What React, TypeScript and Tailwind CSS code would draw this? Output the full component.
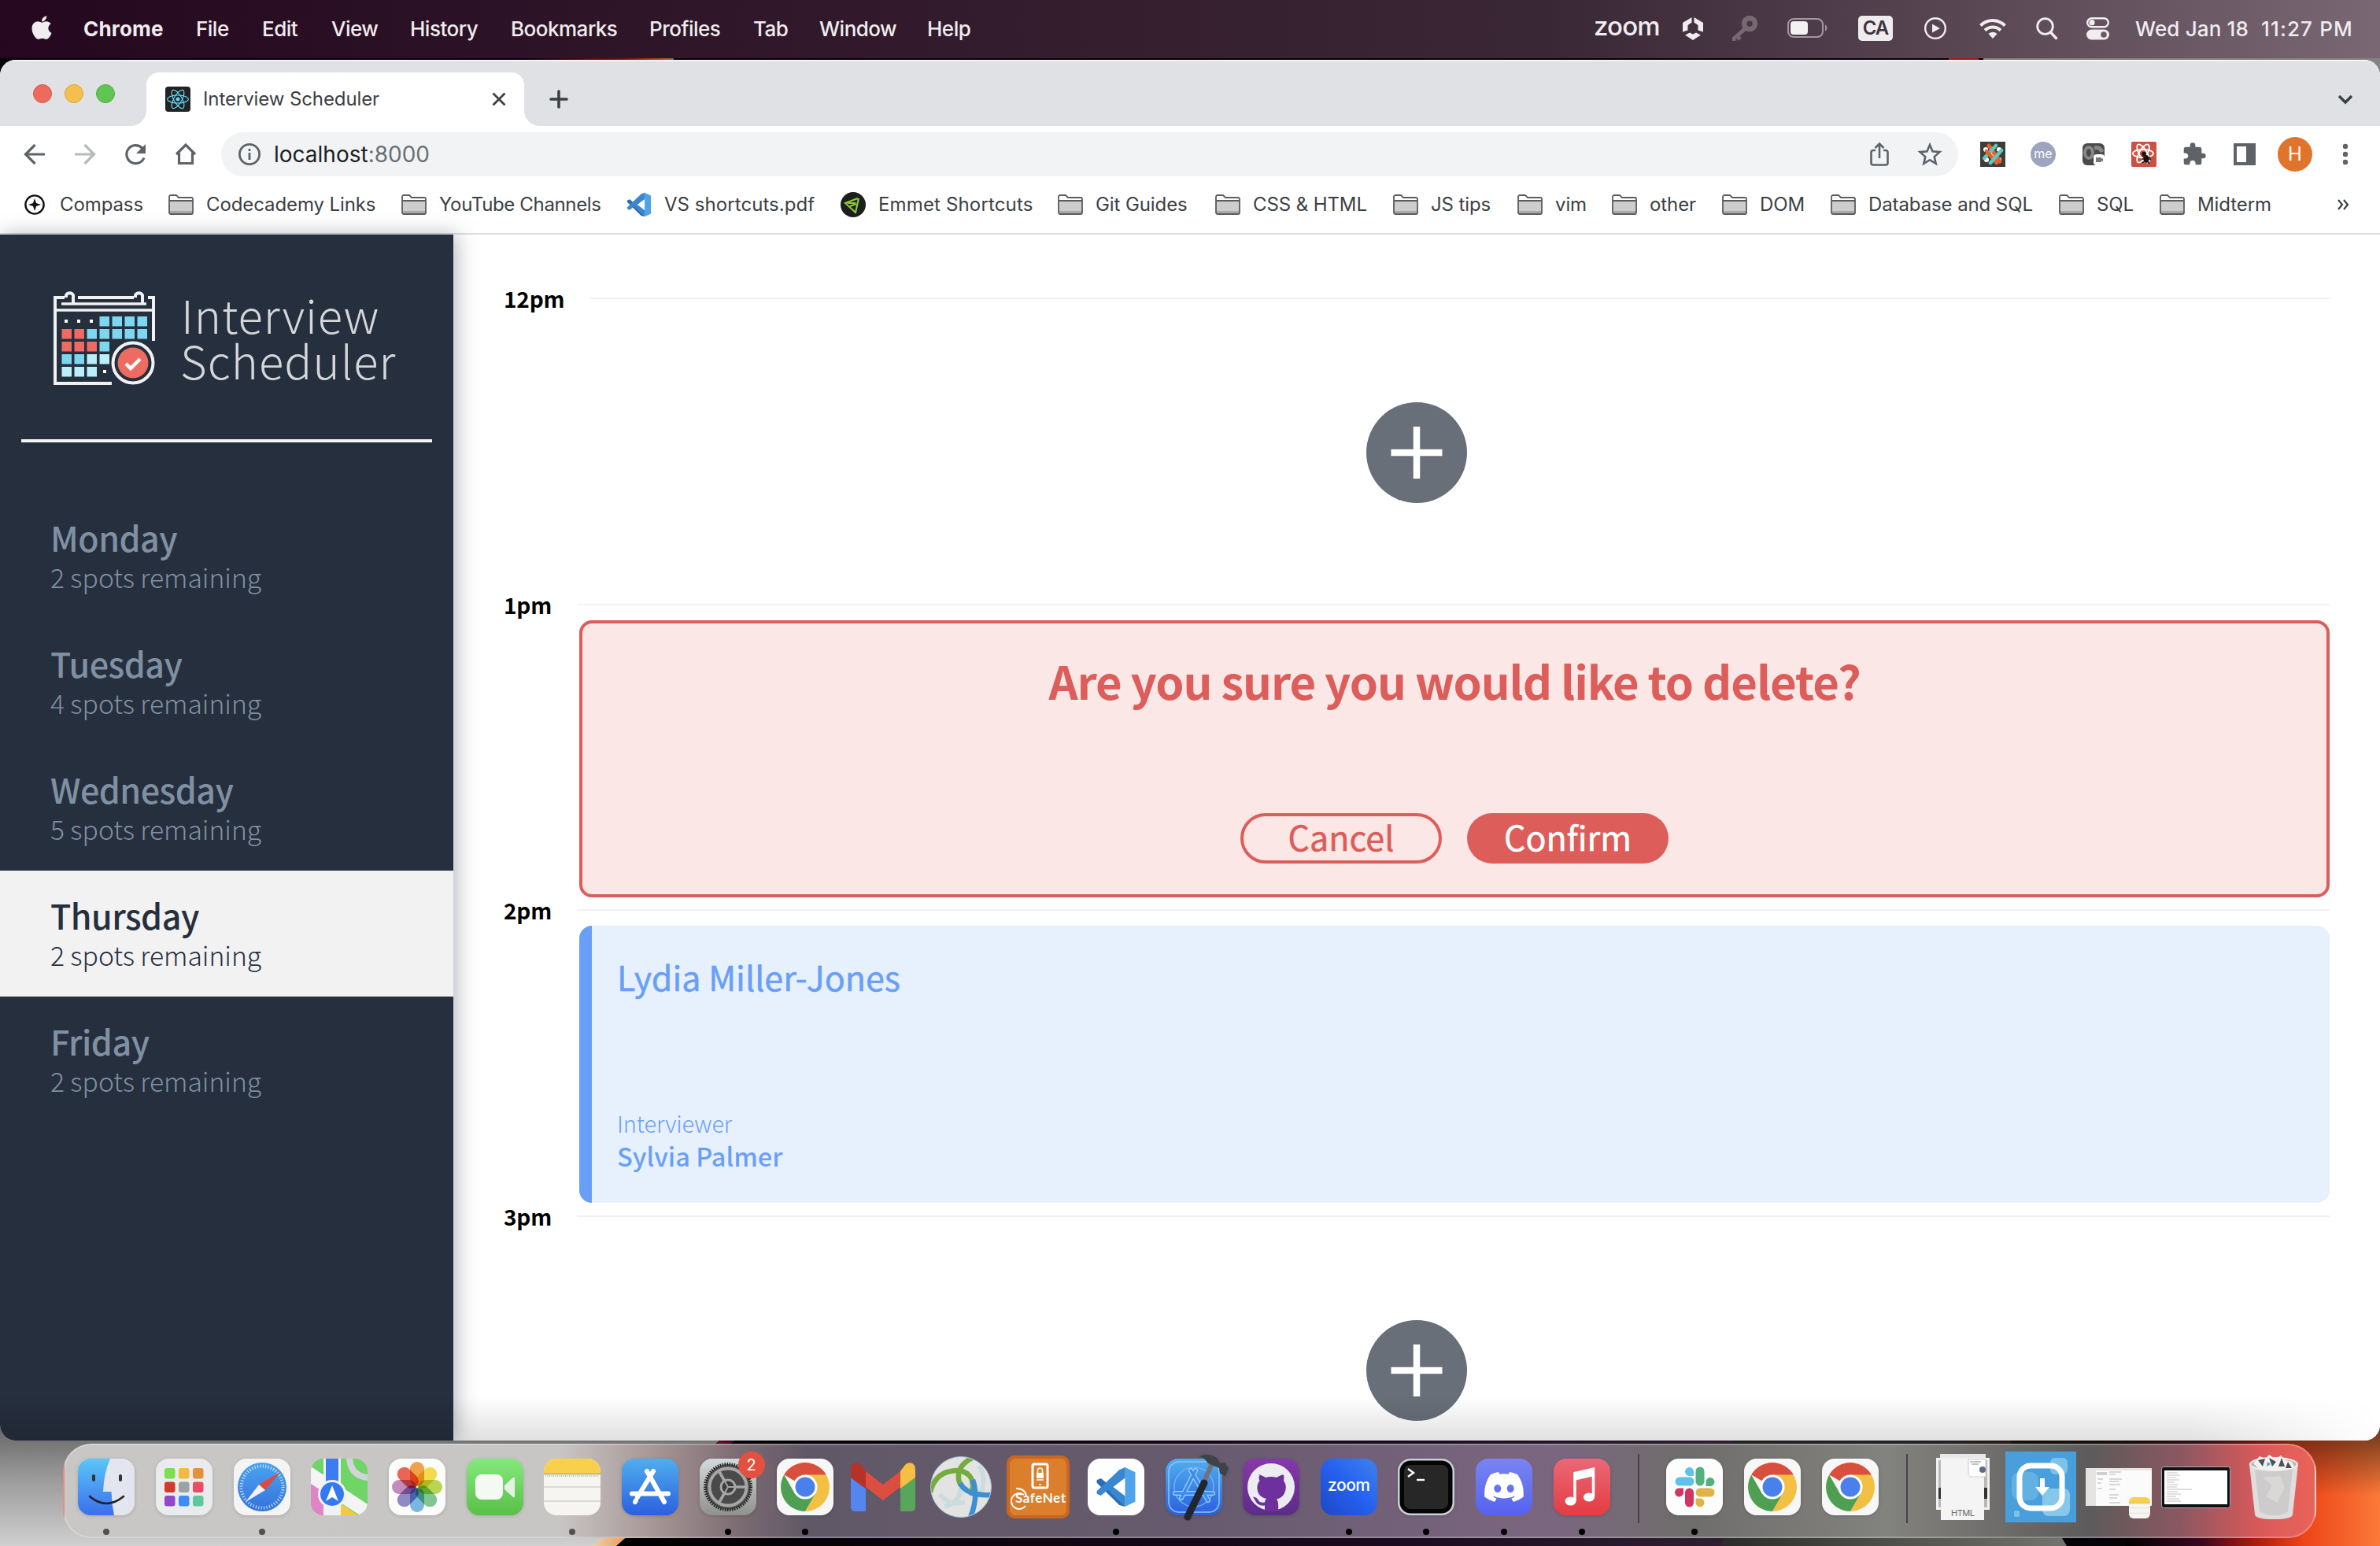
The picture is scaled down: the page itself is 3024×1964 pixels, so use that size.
import type { ReactNode } from 'react';
import { FaApple, FaDiscord, FaReact } from 'react-icons/fa';
import { MdExtension } from 'react-icons/md';

const source = "font-['Noto_Sans_CJK_SC','Source_Sans_Pro',sans-serif]";

/* ---------- menu bar ---------- */

const menus = [
  { label: 'Chrome', cls: 'w-[143px] font-bold tracking-[0.2px]' },
  { label: 'File', cls: 'w-[84px]' },
  { label: 'Edit', cls: 'w-[88px]' },
  { label: 'View', cls: 'w-[100px]' },
  { label: 'History', cls: 'w-[128px]' },
  { label: 'Bookmarks', cls: 'w-[176px]' },
  { label: 'Profiles', cls: 'w-[132px]' },
  { label: 'Tab', cls: 'w-[84px]' },
  { label: 'Window', cls: 'w-[137px]' },
  { label: 'Help', cls: 'w-[80px]' },
];

function MenuBar() {
  return (
    <header className="relative flex h-[74px] shrink-0 items-center bg-linear-to-r from-[#25081f] via-[#3a2735] via-65% to-[#796873] pb-[2px] font-[Inter] text-[26px] font-medium tracking-[-0.5px] text-[#f0ecef]">
      <FaApple className="mb-[2px] ml-[36px] h-[34px] w-[34px]" />
      <nav className="ml-[36px] flex">
        {menus.map((m) => (
          <span key={m.label} className={m.cls}>
            {m.label}
          </span>
        ))}
      </nav>
      <div className="ml-auto flex items-center">
        <span className="mb-[5px] w-[113px] text-[33px] leading-none tracking-[-0.8px]">zoom</span>
        <svg className="w-[63px]" width="63" height="32" viewBox="0 0 63 32" fill="currentColor">
          <path d="M11.500 2v6.500L6.500 12v6.500L0 20.500V9zM14.500 2v6.500l5 3.500v6.500l6.500 2V9zM3 24.500l6-3 4 2 4-2 6 3L13 31z" />
        </svg>
        <svg width="70" height="36" viewBox="0 0 70 36" fill="none" opacity=".25">
          <circle cx="22" cy="12" r="7" stroke="#fff" strokeWidth="6.500" />
          <path d="M17 18L2 31v3M6 28l4 4" stroke="#fff" strokeWidth="5" />
        </svg>
        <svg width="90" height="28" viewBox="0 0 90 28" fill="none">
          <rect x="1" y="2" width="44" height="23" rx="7" stroke="#a397a1" strokeWidth="2" />
          <rect x="4" y="5" width="22" height="17" rx="4" fill="#f4f1f3" />
          <path d="M48 9.500c3 1 3 7 0 8z" fill="#a397a1" />
        </svg>
        <span className="mr-[40px] flex h-8 w-[44px] items-center justify-center rounded-[5px] bg-[#efecee] text-[24px] font-semibold tracking-[-1px] text-[#3f333d]">
          CA
        </span>
        <svg width="70" height="30" viewBox="0 0 70 30">
          <circle cx="14" cy="15" r="12.800" fill="none" stroke="currentColor" strokeWidth="2.400" />
          <path d="M10 9.500l10 5.500-10 5.500z" fill="currentColor" />
        </svg>
        <svg width="72" height="28" viewBox="0 0 72 28" fill="none" stroke="currentColor" strokeWidth="4">
          <path d="M1.500 10.500a22 22 0 0 1 31 0" />
          <path d="M7 16.500a14.500 14.500 0 0 1 20 0" />
          <path d="M17 27l-5.500-6a8 8 0 0 1 11 0z" fill="currentColor" stroke="none" />
        </svg>
        <svg width="64" height="30" viewBox="0 0 64 30" fill="none" stroke="currentColor" strokeWidth="2.800">
          <circle cx="11.500" cy="12.500" r="9.800" />
          <path d="M18.500 20l7 7.500" strokeWidth="3.400" strokeLinecap="round" />
        </svg>
        <svg width="62" height="30" viewBox="0 0 62 30">
          <rect x="1.200" y="2.200" width="26.600" height="11" rx="5.500" fill="none" stroke="currentColor" strokeWidth="2.400" />
          <circle cx="7" cy="7.700" r="3.600" fill="currentColor" />
          <rect x="0" y="16.500" width="29" height="13" rx="6.500" fill="currentColor" />
          <circle cx="22" cy="23" r="3.800" fill="#6a5865" />
        </svg>
        <span className="w-[160px] tracking-[0.15px]">Wed Jan 18</span>
        <span className="w-[151px] tracking-[1.150px]">11:27 PM</span>
      </div>
    </header>
  );
}

/* ---------- browser chrome ---------- */

function TabStrip() {
  return (
    <div className="flex h-[84px] shrink-0 border-t-2 border-[#f4f2f6] bg-[#dfe1e5] pt-[14px]">
      <div className="flex w-[166px] gap-4 pt-[15px] pl-[42px]">
        <i className="size-6 rounded-full border border-[#d8574b] bg-[#ed6a5e]" />
        <i className="size-6 rounded-full border border-[#dfa53c] bg-[#f5bf4f]" />
        <i className="size-6 rounded-full border border-[#50ac41] bg-[#61c554]" />
      </div>
      <svg width="20" height="68" className="self-end" viewBox="0 0 20 68">
        <path d="M20 48v20H0a20 20 0 0 0 20-20z" fill="#fff" />
      </svg>
      <div className="flex h-[68px] w-[480px] items-center rounded-t-[16px] bg-white pl-[24px] font-[Inter]">
        <span className="flex size-8 items-center justify-center rounded-[4px] bg-[#222]">
          <FaReact className="size-[28px] text-[#61dafb]" />
        </span>
        <span className="ml-[16px] w-[367px] text-[24px] tracking-[-0.1px] text-[#3c4043]">Interview Scheduler</span>
        <svg width="18" height="18" viewBox="0 0 18 18" stroke="#3c4043" strokeWidth="2.800">
          <path d="M1.500 1.500l15 15M16.500 1.500l-15 15" />
        </svg>
      </div>
      <svg width="20" height="68" className="self-end" viewBox="0 0 20 68">
        <path d="M0 48v20h20A20 20 0 0 1 0 48z" fill="#fff" />
      </svg>
      <svg width="24" height="24" viewBox="0 0 24 24" stroke="#3c4043" strokeWidth="3.600" strokeLinecap="round" className="mt-[22px] ml-[12px]">
        <path d="M12 2v20M2 12h20" />
      </svg>
      <svg width="20" height="14" viewBox="0 0 20 14" fill="none" stroke="#3c4043" strokeWidth="3.400" className="mt-[28px] mr-[34px] ml-auto">
        <path d="M2 2l8 8 8-8" />
      </svg>
    </div>
  );
}

function ToolIcon({ children, cls = '' }: { children: ReactNode; cls?: string }) {
  return (
    <svg width="32" height="32" viewBox="0 0 32 32" fill="none" stroke="#5f6368" strokeWidth="3.200" className={cls}>
      {children}
    </svg>
  );
}

function Toolbar() {
  return (
    <div className="flex h-[72px] shrink-0 items-center bg-white pl-[28px] font-[Inter]">
      <ToolIcon cls="mr-8">
        <path d="M29 16H5M16.500 4L4.500 16l12 12" />
      </ToolIcon>
      <ToolIcon cls="mr-8 opacity-45">
        <path d="M3 16h24M15.500 4l12 12-12 12" />
      </ToolIcon>
      <ToolIcon cls="mr-8">
        <path d="M27 20.500A11.500 11.500 0 1 1 24.500 8l2 2" />
        <path d="M29 3v12H17z" fill="#5f6368" stroke="none" />
      </ToolIcon>
      <ToolIcon cls="mr-[29px]">
        <path d="M4 16L16 4l12 12M7.500 14v13.500h17V14" />
      </ToolIcon>
      <div className="flex h-[56px] w-[2207px] items-center rounded-full bg-[#f1f3f4] pl-[21px]">
        <svg width="30" height="30" viewBox="0 0 30 30" fill="none" stroke="#5f6368" strokeWidth="2.800">
          <circle cx="15" cy="15" r="12.600" />
          <path d="M15 13v9M15 8v3" />
        </svg>
        <span className="ml-[16px] text-[28px] text-[#202124]">
          localhost<span className="text-[#6b6f73]">:8000</span>
        </span>
        <svg width="28" height="32" viewBox="0 0 28 32" fill="none" stroke="#5f6368" strokeWidth="2.600" className="mr-[34px] ml-auto">
          <path d="M9 11H6a2.500 2.500 0 0 0-2.500 2.500V27A2.500 2.500 0 0 0 6 29.500h16a2.500 2.500 0 0 0 2.500-2.500V13.500A2.500 2.500 0 0 0 22 11h-3M14 21V2.500M8.500 8L14 2.500 19.500 8" />
        </svg>
        <svg width="32" height="32" viewBox="0 0 32 32" fill="none" stroke="#5f6368" strokeWidth="2.600" className="mr-[20px]">
          <path d="M16 4l3.500 8.300 9 .8-6.800 6 2 8.800L16 23.200l-7.700 4.700 2-8.800-6.800-6 9-.8z" />
        </svg>
      </div>
      <div className="flex items-center gap-8 pl-[28px]">
        <svg width="32" height="32" viewBox="0 0 32 32" fill="none" strokeWidth="4.600">
          <rect width="32" height="32" fill="#3d3d3d" />
          <path d="M7 10h.1M24 10h.1M8 23h.1M24 23h.1M16 16h.1" stroke="#fff" strokeWidth="6" strokeLinecap="round" />
          <path d="M11 5L25 25" stroke="#e8602c" strokeWidth="5" strokeLinecap="round" />
          <path d="M20 5L5 21" stroke="#5ec8ba" strokeLinecap="round" />
          <path d="M8 12l13 15" stroke="#e8602c" strokeLinecap="round" />
          <path d="M27 11L13 27" stroke="#5ec8ba" strokeLinecap="round" />
        </svg>
        <span className="flex size-8 items-center justify-center rounded-full bg-[#9ea3c0] pb-[2px] text-[16px] text-white">me</span>
        <svg width="32" height="32" viewBox="0 0 32 32">
          <rect x="2" y="2" width="28" height="28" rx="6" fill="#4a4a4a" />
          <ellipse cx="10" cy="14" rx="5" ry="7" fill="none" stroke="#888" strokeWidth="4" />
          <path d="M17 8q7-2 10 5" fill="none" stroke="#888" strokeWidth="5" />
          <rect x="16" y="16" width="14" height="14" rx="4" fill="#fff" />
          <path d="M19 20h7v6h-7zM26 22l2-1v4l-2-1z" fill="#777" />
        </svg>
        <svg width="32" height="32" viewBox="0 0 32 32" fill="none" stroke="#fff" strokeWidth="1.800">
          <rect width="32" height="32" rx="2" fill="#cb5140" stroke="none" />
          <ellipse cx="15" cy="15" rx="13" ry="5" />
          <ellipse cx="15" cy="15" rx="13" ry="5" transform="rotate(60 15 15)" />
          <ellipse cx="15" cy="15" rx="13" ry="5" transform="rotate(120 15 15)" />
          <ellipse cx="19" cy="22" rx="3.500" ry="5" fill="#1d1210" stroke="none" />
          <circle cx="16" cy="15.500" r="2.800" fill="#1d1210" stroke="none" />
          <path d="M13 22h12M14 27l10-8M23 28l-3-4M14 18l4 4" stroke="#1d1210" strokeWidth="1.500" />
        </svg>
        <MdExtension className="size-8 text-[#5f6368]" />
        <svg width="32" height="32" viewBox="0 0 32 32">
          <path d="M2 2h28v28H2zM6 6v20h12V6z" fill="#5f6368" fillRule="evenodd" />
        </svg>
      </div>
      <span className="ml-[26px] flex size-11 items-center justify-center rounded-full bg-[#e0742c] text-[24px] text-white">H</span>
      <svg width="8" height="28" viewBox="0 0 8 28" fill="#5f6368" className="ml-[38px]">
        <circle cx="4" cy="4" r="3.200" />
        <circle cx="4" cy="14" r="3.200" />
        <circle cx="4" cy="24" r="3.200" />
      </svg>
    </div>
  );
}

function Folder() {
  return (
    <svg width="32" height="26" viewBox="0 0 32 26">
      <path d="M1 3a2 2 0 0 1 2-2h7l3 3h16a2 2 0 0 1 2 2v17a2 2 0 0 1-2 2H3a2 2 0 0 1-2-2z" fill="#fff" />
      <path d="M1 8h30v14H1z" fill="#cdcdcd" />
      <path d="M1 21h30v3H1z" fill="#a9a9a9" />
      <path d="M1 8h30M1 3a2 2 0 0 1 2-2h7l3 3h16a2 2 0 0 1 2 2v17a2 2 0 0 1-2 2H3a2 2 0 0 1-2-2z" fill="none" stroke="#5c5c5c" strokeWidth="1.800" />
    </svg>
  );
}

function VsCode({ size }: { size: number }) {
  return (
    <svg width={size} height={size} viewBox="0 0 100 100">
      <path d="M72 2L30 43 13 29 3 33v7l55 54 14 4z" fill="#2a6db5" />
      <path d="M72 98L30 57 13 71 3 67v-7L58 8l14-6z" fill="#3b86d0" />
      <path d="M72 2l25 12v72L72 98c2-1 1-4 0-5V7z" fill="#4fa3ea" />
      <path d="M72 28v44L43 50z" fill="#fff" />
    </svg>
  );
}

const bookmarks: { label: string; cls: string; icon?: 'compass' | 'vs' | 'emmet' }[] = [
  { label: 'Compass', cls: 'w-[186px]', icon: 'compass' },
  { label: 'Codecademy Links', cls: 'w-[296px]' },
  { label: 'YouTube Channels', cls: 'w-[286px] tracking-[-0.35px]' },
  { label: 'VS shortcuts.pdf', cls: 'w-[272px] tracking-[0.05px]', icon: 'vs' },
  { label: 'Emmet Shortcuts', cls: 'w-[276px] tracking-[0.15px]', icon: 'emmet' },
  { label: 'Git Guides', cls: 'w-[200px]' },
  { label: 'CSS & HTML', cls: 'w-[226px]' },
  { label: 'JS tips', cls: 'w-[158px]' },
  { label: 'vim', cls: 'w-[120px]' },
  { label: 'other', cls: 'w-[140px]' },
  { label: 'DOM', cls: 'w-[138px]' },
  { label: 'Database and SQL', cls: 'w-[290px]' },
  { label: 'SQL', cls: 'w-[128px]' },
  { label: 'Midterm', cls: 'w-[225px]' },
];

function BookmarkBar() {
  return (
    <div className="flex h-[66px] shrink-0 items-center border-b-2 border-[#dadce0] bg-white pb-[9px] pl-[28px] font-[Inter] text-[24px] tracking-[-0.1px] text-[#3c4043]">
      {bookmarks.map((b) => (
        <div key={b.label} className={`flex shrink-0 items-center gap-4 whitespace-nowrap ${b.cls}`}>
          {!b.icon && <Folder />}
          {b.icon === 'compass' && (
            <svg width="32" height="32" viewBox="0 0 32 32">
              <circle cx="16" cy="16" r="11.600" fill="none" stroke="#111" strokeWidth="2.400" />
              <path d="M16 8l2 6 6 2-6 2-2 6-2-6-6-2 6-2z" fill="#111" />
            </svg>
          )}
          {b.icon === 'vs' && <VsCode size={32} />}
          {b.icon === 'emmet' && (
            <svg width="32" height="32" viewBox="0 0 32 32" fill="none" stroke="#8fc83c" strokeWidth="2.200">
              <circle cx="16" cy="16" r="16" fill="#1d1f1c" stroke="none" />
              <path d="M22 8L6 14l13 12 4-18M9 14h10M12 18l8-3" />
            </svg>
          )}
          <span>{b.label}</span>
        </div>
      ))}
      <svg width="16" height="14" viewBox="0 0 16 14" fill="none" stroke="#3c4043" strokeWidth="2.200">
        <path d="M2 1l5 6-5 6M9 1l5 6-5 6" />
      </svg>
    </div>
  );
}

/* ---------- scheduler app ---------- */

const R = '#ee6b62';
const B = '#7dd8ef';
const L = '#baeffa';
const cells: (string | null)[][] = [
  [null, null, null, B, B, B, B],
  [R, R, B, B, B, B, B],
  [R, R, R, B],
  [B, B, L, L],
  [L, L, L],
];

function Logo() {
  return (
    <svg width="130" height="122" viewBox="0 0 130 122" fill="none">
      <path d="M12 10H2v109h72M120 10h7v55M31 10h71" stroke="#f1f1f1" strokeWidth="4" />
      <path d="M10 18h108M2 26h125" stroke="#f1f1f1" strokeWidth="3.600" />
      <path d="M2 10h12M16 10V7a5 5 0 0 1 9 0v11M104 10V7a5 5 0 0 1 9 0v11" stroke="#f1f1f1" strokeWidth="4" />
      {cells.map((row, y) =>
        row.map((c, x) => c && <rect key={`${x}-${y}`} x={10.5 + x * 16} y={34 + y * 16} width="12.500" height="12.500" fill={c} />),
      )}
      <path d="M14 38h4v4h-4zM30 38h4v4h-4zM46 38h4v4h-4zM63 102h4v4h-4z" fill="#fff" />
      <circle cx="101" cy="93" r="29" fill="#262f3e" />
      <circle cx="101" cy="93" r="25.500" stroke="#f1f1f1" strokeWidth="4" />
      <circle cx="101" cy="93" r="19.500" fill={R} />
      <path d="M92 94l6 6 12-12" stroke="#fff" strokeWidth="4.500" />
    </svg>
  );
}

const days = [
  ['Monday', '2 spots remaining'],
  ['Tuesday', '4 spots remaining'],
  ['Wednesday', '5 spots remaining'],
  ['Thursday', '2 spots remaining'],
  ['Friday', '2 spots remaining'],
];

function Sidebar() {
  return (
    <aside className={`relative z-10 flex w-[576px] shrink-0 flex-col bg-[#262f3e] pt-[70px] shadow-[4px_0_24px_rgba(38,47,62,0.35)] ${source}`}>
      <div className="flex h-[122px] pl-[68px]">
        <Logo />
        <div className="ml-[31px] pt-[2px] text-[58px] leading-[58px] font-light text-[#d5d6d8]">
          <div className="ml-[1px] tracking-[0.950px]">Interview</div>
          <div className="tracking-[1.100px]">Scheduler</div>
        </div>
      </div>
      <hr className="mx-[27px] mt-[68px] h-1 border-0 bg-[#f4f6f2]" />
      <ul className="mt-[64px]">
        {days.map(([day, spots]) => (
          <li key={day} className={`h-[160px] pt-[30px] pl-[64px] ${day === 'Thursday' ? 'bg-[#f2f2f2] text-[#262f3e]' : 'text-[#8090a3]'}`}>
            <h2 className="text-[43px] leading-[52px] font-medium tracking-[-0.5px]">{day}</h2>
            <h3 className="text-[33.700px] leading-[50px] font-light tracking-[-0.05px]">{spots}</h3>
          </li>
        ))}
      </ul>
    </aside>
  );
}

function Slot({ time, children }: { time: string; children: ReactNode }) {
  return (
    <article className="h-[388.670px] pr-[64px] pl-[64px]">
      <header className="flex h-5 items-center">
        <h4 className="mr-[32px] text-[28px] leading-5 font-bold tracking-[-0.2px] text-black">{time}</h4>
        <div className="h-[2px] flex-1 bg-[#f1f1f1]" />
      </header>
      <div className="mt-[10px] ml-[96px] h-[352px]">{children}</div>
    </article>
  );
}

function AddButton() {
  return (
    <div className="flex h-full items-center justify-center pr-[96px]">
      <svg width="128" height="128" viewBox="0 0 128 128">
        <circle cx="64" cy="64" r="64" fill="#686f79" />
        <path d="M64 31v66M31.500 64h65" stroke="#fff" strokeWidth="8.500" />
      </svg>
    </div>
  );
}

function Schedule() {
  return (
    <main className={`flex-1 bg-white pt-[71px] ${source}`}>
      <Slot time="12pm">
        <AddButton />
      </Slot>
      <Slot time="1pm">
        <div className="flex h-full flex-col items-center rounded-[16px] border-4 border-[#dc5d59] bg-[#fae7e6] pt-[43px] text-[#dc5d59]">
          <h1 className="text-[58px] leading-[58px] font-bold tracking-[-1.100px]">Are you sure you would like to delete?</h1>
          <div className="mt-[140px] flex gap-8 text-[43px] [-webkit-text-stroke:0.500px]">
            <button className="flex h-16 w-64 items-center justify-center rounded-full border-4 border-[#dc5d59] pb-[4px]">Cancel</button>
            <button className="flex h-16 w-64 items-center justify-center rounded-full bg-[#dc5d59] pb-[4px] text-white">Confirm</button>
          </div>
        </div>
      </Slot>
      <Slot time="2pm">
        <div className="h-full rounded-[16px] border-l-[16px] border-[#6a9ff8] bg-[#e7f1fe] pt-[38px] pl-[32px] text-[#6a9ff8]">
          <h2 className="text-[43px] leading-[52px] [-webkit-text-stroke:0.500px]">Lydia Miller-Jones</h2>
          <h4 className="mt-[142px] text-[29px] leading-[36px] font-light tracking-[-0.15px]">Interviewer</h4>
          <h3 className="text-[32.500px] leading-[47px] font-medium">Sylvia Palmer</h3>
        </div>
      </Slot>
      <Slot time="3pm">
        <AddButton />
      </Slot>
    </main>
  );
}

/* ---------- dock ---------- */

function Tile({ fill, children }: { fill: string; children?: ReactNode }) {
  return (
    <svg width="72" height="72" viewBox="0 0 72 72" className="overflow-visible drop-shadow-sm">
      <rect width="72" height="72" rx="16" fill={fill} />
      {children}
    </svg>
  );
}

function Finder() {
  return (
    <Tile fill="#e3e6ee">
      <path d="M41 0H16A16 16 0 0 0 0 16v40a16 16 0 0 0 16 16h30q-3-14-3.500-30H32Q33 18 41 0z" fill="url(#gFinder)" />
      <path d="M20 22v5M54 22v5" stroke="#333" strokeWidth="4" strokeLinecap="round" />
      <path d="M15 48q21 18 43 0" stroke="#222" strokeWidth="2.600" fill="none" strokeLinecap="round" />
    </Tile>
  );
}

function Launchpad() {
  const c = ['#7be04f', '#f5b840', '#e5903a', '#d23a2c', '#9aa2a5', '#e84d63', '#9147c9', '#3b8df5', '#5fc79b'];
  return (
    <Tile fill="#eaebed">
      {c.map((f, i) => (
        <rect key={f} x={11 + (i % 3) * 18} y={12 + Math.floor(i / 3) * 17.5} width="13.500" height="13.500" rx="3" fill={f} />
      ))}
    </Tile>
  );
}

function Safari() {
  return (
    <Tile fill="#f4f4f4">
      <circle cx="36" cy="36" r="31" fill="url(#gSafari)" />
      <circle cx="36" cy="36" r="26.500" fill="none" stroke="#d8ecff" strokeWidth="4" strokeDasharray="1 2.470" />
      <path d="M59 17L32 33l8 7z" fill="#e2483d" />
      <path d="M15 55l17-22 8 7z" fill="#f2f2f2" />
    </Tile>
  );
}

function Maps() {
  return (
    <svg width="72" height="72" viewBox="0 0 72 72">
      <clipPath id="maps">
        <rect width="72" height="72" rx="16" />
      </clipPath>
      <g clipPath="url(#maps)">
        <rect width="72" height="72" fill="#6fd566" />
        <path d="M0 28L18 40V72H0z" fill="#e084c8" />
        <path d="M0 10l72 48v20L0 32z" fill="#f4f4f6" />
        <path d="M38 57l22 15H38z" fill="#f5c93f" />
        <path d="M16 0h22v72H16z" fill="#f0f1f4" />
        <path d="M19 0h16v40H19z" fill="#3b7df0" />
        <path d="M49 0q2 22 23 24" fill="none" stroke="#d3d4db" strokeWidth="8" />
        <circle cx="27" cy="45" r="18" fill="#f1f2f5" />
        <circle cx="27" cy="45" r="15" fill="#3478f3" />
        <path d="M27 34l8 20-8-5-8 5z" fill="#fff" />
      </g>
    </svg>
  );
}

function Photos() {
  const c = ['#f09a37', '#f4dc3a', '#b5d342', '#74c385', '#6db0e0', '#8680c0', '#c07fb8', '#ea5545'];
  return (
    <Tile fill="#fcfcfc">
      {c.map((f, i) => (
        <rect key={f} x="27" y="4" width="18" height="31" rx="9" fill={f} className="mix-blend-multiply" opacity=".9" transform={`rotate(${i * 45} 36 36)`} />
      ))}
    </Tile>
  );
}

function FaceTime() {
  return (
    <Tile fill="url(#gGreen)">
      <rect x="11" y="20" width="35" height="32" rx="8" fill="#f4faf3" />
      <path d="M48 34l11-10q2-1 2 1v23q0 2-2 1L48 39z" fill="#e4f2e1" />
    </Tile>
  );
}

function Notes({ w = 72 }: { w?: number }) {
  return (
    <svg width={w} height={w} viewBox="0 0 72 72">
      <rect width="72" height="72" rx="16" fill="#f6f5f1" />
      <path d="M0 19v-3A16 16 0 0 1 16 0h40a16 16 0 0 1 16 16v3z" fill="#f9d04c" />
      <path d="M0 19.500h72" stroke="#b9a970" strokeWidth="1.500" />
      <path d="M2 22h68" stroke="#b5b5b5" strokeWidth="2" strokeDasharray="1 1.500" />
      <path d="M0 36h72M0 54h72" stroke="#d2d1ce" strokeWidth="1.400" />
    </svg>
  );
}

function AppStore() {
  return (
    <Tile fill="url(#gBlue)">
      <path d="M40 16L20 49M32 16l22 39M13 44.500h46M18 53l-1 2" stroke="#fff" strokeWidth="6" strokeLinecap="round" />
    </Tile>
  );
}

function Settings() {
  return (
    <div className="relative">
      <Tile fill="url(#gGrey)">
        <circle cx="36" cy="36" r="29" fill="#555" />
        <circle cx="36" cy="36" r="29" fill="none" stroke="#222" strokeWidth="4" strokeDasharray="1.500 1.500" />
        <circle cx="36" cy="36" r="23.500" fill="#4a4a4a" stroke="#a6a6a6" strokeWidth="4" />
        <path d="M36 36h22M36 36L24 15M36 36L24 57" stroke="#a6a6a6" strokeWidth="3.600" />
        <circle cx="36" cy="36" r="9" fill="#3c3c3c" stroke="#a6a6a6" strokeWidth="3" />
        <path d="M36 36h9M36 36l-4.500-8M36 36l-4.500 8" stroke="#a6a6a6" strokeWidth="2" />
      </Tile>
      <span className="absolute -top-[9px] -right-[11px] flex size-[34px] items-center justify-center rounded-full bg-[#e4503f] font-[Inter] text-[20px] text-white">
        2
      </span>
    </div>
  );
}

function Chrome() {
  return (
    <Tile fill="#f7f7f7">
      <path d="M9.200 20.500A31 31 0 0 1 62.800 20.500L36 36z" fill="#d94f3d" />
      <path d="M36 20.500h26.800A31 31 0 0 1 36 67l13.400-23.300z" fill="#f3c044" />
      <path d="M22.600 43.700L9.200 20.500A31 31 0 0 0 36 67l13.400-23.300z" fill="#4f9f52" />
      <circle cx="36" cy="36" r="15.500" fill="#fff" />
      <circle cx="36" cy="36" r="12.500" fill="#4a80ec" />
    </Tile>
  );
}

function Gmail() {
  return (
    <svg width="84" height="64" viewBox="0 0 84 64">
      <path d="M1 20l19 14v29H6a5 5 0 0 1-5-5z" fill="#5585ee" />
      <path d="M83 20L64 34v29h14a5 5 0 0 0 5-5z" fill="#58a65c" />
      <path d="M20 12l22 17 22-17v20L42 49 20 32z" fill="#dc4f40" />
      <path d="M1 10C1 1 9-1 14 4l6 8v22L1 20z" fill="#b63227" />
      <path d="M83 10c0-9-8-11-13-6l-6 8v22l19-14z" fill="#f3c044" />
    </svg>
  );
}

function Cisco() {
  return (
    <svg width="78" height="78" viewBox="0 0 78 78" fill="none">
      <clipPath id="cisco">
        <circle cx="39" cy="39" r="38" />
      </clipPath>
      <circle cx="39" cy="39" r="38.500" fill="#e3e3e1" stroke="#9cc4da" />
      <g clipPath="url(#cisco)">
        <path d="M12 48q12 16 32 10M62 12q10 16 2 34M18 64q22-6 20-24" stroke="#cbdcde" strokeWidth="6" />
        <path d="M0 46Q6 18 36 18q24 4 16 32" stroke="#74ac40" strokeWidth="6.500" />
        <path d="M58 0Q34 10 36 28q0 4 3 9" stroke="#74ac40" strokeWidth="6.500" />
        <path d="M38 34q8 17 42 15M54 30q8 22-4 50" stroke="#3d8ed3" strokeWidth="6.500" />
      </g>
    </svg>
  );
}

function SafeNet() {
  return (
    <svg width="80" height="80" viewBox="0 0 80 80" fill="none">
      <rect width="80" height="80" rx="10" fill="#c9661f" />
      <rect x="4" y="4" width="72" height="72" rx="7" fill="#dc7f2c" />
      <rect x="33" y="11" width="19" height="30" rx="2" stroke="#fff" strokeWidth="3" />
      <path d="M38 22h9v7h-9z" fill="#fff" />
      <path d="M39.500 22v-3a3 3 0 0 1 6 0v3M38 31h9M41 37h3" stroke="#fff" strokeWidth="1.600" />
      <path d="M22 50a10 10 0 1 0 2 14M12 42q12 0 13 10" stroke="#fff" strokeWidth="1.800" />
      <text x="11" y="60" fill="#fff" fontFamily="Lato" fontWeight="700" fontSize="17" textLength="64">
        SafeNet
      </text>
    </svg>
  );
}

function Xcode() {
  return (
    <Tile fill="url(#gBlue)">
      <rect x="4" y="4" width="64" height="64" rx="13" fill="none" stroke="#8fc5f7" strokeWidth="1.500" />
      <circle cx="36" cy="36" r="25" fill="none" stroke="#7db8f3" strokeWidth="1.200" />
      <path d="M38 15L20 50M32 15l22 38M12 44h48" stroke="#a5d1fa" strokeWidth="6" strokeLinecap="round" />
      <path d="M38 15L20 50M32 15l22 38M12 44h48" stroke="#3a8df0" strokeWidth="3.500" strokeLinecap="round" />
      <path d="M59 6L47 34" stroke="#70747a" strokeWidth="6" />
      <path d="M49 31L28 74" stroke="#23272d" strokeWidth="9" strokeLinecap="round" />
      <path d="M42-3q14-5 24 3l3 6 6-1 5 7-4 10-7-3-1-7-14-6q-5-8-12-9z" fill="#3f4247" />
    </Tile>
  );
}

function GitHub() {
  return (
    <Tile fill="url(#gPurple)">
      <circle cx="36" cy="36" r="30" fill="#ececf1" />
      <path d="M20 21q1-2 9 3 7-2 14 0 8-5 9-3 1 3 0 7 5 7 1 16-3 6-10 7.500 3 3 2 15h-17q0-3 0-7-9 1-12-6l-3-5q5 0 8 6 3 2 7 1 0-3 2-4.500-8-2-10.500-8-3-9 2-15-2-4 0-7z" fill="#6d309c" />
    </Tile>
  );
}

function Terminal() {
  return (
    <Tile fill="#c5d0d2">
      <rect x="2.500" y="2.500" width="67" height="67" rx="14" fill="#050505" />
      <rect x="8" y="8" width="56" height="56" rx="8" fill="#272727" />
      <path d="M13 13l7 5-7 5" stroke="#fff" strokeWidth="2.400" fill="none" />
      <path d="M24 27h10" stroke="#fff" strokeWidth="2.400" />
    </Tile>
  );
}

function Music() {
  return (
    <Tile fill="url(#gRed)">
      <path d="M26 17l26-6v11l-26 6z" fill="#fff" />
      <path d="M27 17v37M50.500 12v36" stroke="#fff" strokeWidth="3.500" />
      <ellipse cx="21.500" cy="54" rx="7" ry="5.500" fill="#fff" />
      <ellipse cx="45" cy="49" rx="7" ry="5.500" fill="#fff" />
    </Tile>
  );
}

function Slack() {
  return (
    <Tile fill="#fdfdfd">
      <g strokeWidth="11" strokeLinecap="round">
        <path d="M17 29h13" stroke="#62c1ea" />
        <path d="M43 16v13" stroke="#56b07e" />
        <path d="M43 43h13" stroke="#e2b24a" />
        <path d="M29.500 43v13" stroke="#d13661" />
      </g>
      <path d="M35 22h-6a5.500 5.500 0 1 1 6-6z" fill="#62c1ea" />
      <path d="M50.500 35v-6a5.500 5.500 0 1 1 6 6z" fill="#56b07e" />
      <path d="M37.500 50.500h6a5.500 5.500 0 1 1-6 6z" fill="#e2b24a" />
      <path d="M22 37.500v6a5.500 5.500 0 1 1-6-6z" fill="#d13661" />
    </Tile>
  );
}

function HtmlStack() {
  return (
    <svg width="70" height="86" viewBox="0 0 70 86">
      <path d="M6 1h58v10H6z" fill="#e8e8e8" />
      <path d="M1 6h68v66H1z" fill="#f2f2f2" />
      <path d="M4 9h62v60H4z" fill="#b8b8b8" />
      <path d="M62 44h4v14h-4zM4 44h4v14H4z" fill="#333" />
      <path d="M7 9h35l20 22v54H7z" fill="#f4f4f4" />
      <path d="M42 8h22v22H46q-4 0-4-5z" fill="#fff" stroke="#ccc" />
      <path d="M44 11h14M46 14h9" stroke="#888" />
      <circle cx="60" cy="21" r="4" fill="#5d6b85" />
      <text x="35" y="80" textAnchor="middle" fill="#6b6b6b" fontFamily="Inter" fontSize="11" textLength="30">
        HTML
      </text>
    </svg>
  );
}

function Downloads() {
  return (
    <svg width="90" height="90" viewBox="0 0 90 90" fill="none">
      <rect width="90" height="90" fill="#489fdb" />
      <rect x="8" y="26" width="34" height="36" rx="10" fill="#62b1e2" />
      <rect x="57" y="8" width="22" height="21" rx="6" fill="#7cc3e8" />
      <rect x="47" y="47" width="35" height="35" rx="8" fill="#86c8ea" />
      <rect x="11" y="75" width="7" height="8" rx="2" fill="#7cc3e8" />
      <rect x="18" y="18" width="54" height="54" rx="14" stroke="#fff" strokeWidth="7" />
      <path d="M44 34h6v11h6l-9 11-9-11h6z" fill="#fff" />
    </svg>
  );
}

function NotesWindow() {
  return (
    <div className="relative">
      <svg width="84" height="48" viewBox="0 0 84 48">
        <rect width="84" height="48" rx="1" fill="#fbfbfb" />
        <path d="M0 0h13v48H0zM13 0h71v3H13z" fill="#e6e4e2" />
        <path d="M14 5h13v4H14z" fill="#cfcfcf" />
        <path d="M30 5h15M30 8h8M30 14h16M30 17h12M30 21h14M30 27h8M30 34h12M30 38h10M30 44h14M15 14h7M15 19h5M15 26h6" stroke="#b5b5b5" />
      </svg>
      <div className="absolute right-[2px] -bottom-[16px]">
        <Notes w={27} />
      </div>
    </div>
  );
}

function TerminalWindow() {
  return (
    <svg width="88" height="53" viewBox="0 0 88 53">
      <rect x=".5" y=".5" width="87" height="52" rx="3" fill="#111" stroke="#a5a8b8" />
      <path d="M4 5h80v43H4z" fill="#fff" />
      <path d="M7 8h14M7 11h17M7 14h12M7 17h16M7 20h10M7 23h15M7 26h13M7 29h32M7 32h14M7 35h18M7 38h12M7 41h16M7 44h18" stroke="#c0c0c0" />
    </svg>
  );
}

function Trash() {
  return (
    <svg width="64" height="84" viewBox="0 0 64 84">
      <path d="M1 13l7 64q1 6 24 6t24-6l7-64z" fill="#dfdddd" />
      <path d="M8 20l6 53q6 5 18 5t18-5l6-53z" fill="#cdcbcb" />
      <path d="M18 30l12 10-8 14 14 8 10-20-6-14z" fill="#d9d8d7" />
      <ellipse cx="32" cy="13" rx="30" ry="8" fill="#b9b6b6" stroke="#efefef" strokeWidth="2" />
      <path d="M6 12l8-9 8 3 4-5 8 5 7-4 6 6 8 2 3 6-10 4H14z" fill="#f1f1f1" />
      <path d="M12 8l6 8 3-10zM26 5l4 11 5-6zM42 5l-4 11h8zM50 10l-3 8h8z" fill="#4d5254" />
      <path d="M24 10l4 3-5 3z" fill="#4ca8b5" />
    </svg>
  );
}

const dock: { icon: ReactNode; on?: boolean }[][] = [
  [
    { icon: <Finder />, on: true },
    { icon: <Launchpad /> },
    { icon: <Safari />, on: true },
    { icon: <Maps /> },
    { icon: <Photos /> },
    { icon: <FaceTime /> },
    { icon: <Notes />, on: true },
    { icon: <AppStore /> },
    { icon: <Settings />, on: true },
    { icon: <Chrome />, on: true },
    { icon: <Gmail /> },
    { icon: <Cisco /> },
    { icon: <SafeNet /> },
    {
      icon: (
        <div className="flex size-[72px] items-center justify-center rounded-[16px] bg-white">
          <VsCode size={52} />
        </div>
      ),
      on: true,
    },
    { icon: <Xcode /> },
    { icon: <GitHub /> },
    {
      icon: (
        <div className="flex size-[72px] items-center justify-center rounded-[16px] bg-linear-to-bl from-[#3f80ea] via-[#2560f0] to-[#1d48c4] pb-1 font-[Inter] text-[21px] font-medium tracking-[-0.5px] text-white">
          zoom
        </div>
      ),
      on: true,
    },
    { icon: <Terminal />, on: true },
    {
      icon: (
        <div className="flex size-[72px] items-center justify-center rounded-[16px] bg-linear-to-b from-[#7984f2] to-[#5661ee]">
          <FaDiscord className="size-[54px] text-white" />
        </div>
      ),
      on: true,
    },
    { icon: <Music />, on: true },
  ],
  [{ icon: <Slack />, on: true }, { icon: <Chrome /> }, { icon: <Chrome /> }],
  [{ icon: <HtmlStack /> }, { icon: <Downloads /> }, { icon: <NotesWindow /> }, { icon: <TerminalWindow /> }, { icon: <Trash /> }],
];

function Gradient({ id, from, to }: { id: string; from: string; to: string }) {
  return (
    <linearGradient id={id} x1="0" y1="0" x2="0" y2="1">
      <stop stopColor={from} />
      <stop offset="1" stopColor={to} />
    </linearGradient>
  );
}

function Dock() {
  return (
    <div className="relative mt-1 ml-[80px] flex h-[120px] w-[2863px] shrink-0 items-center rounded-[36px] border-2 border-white/25 bg-[linear-gradient(90deg,#c8c7c6_0%,#c8c6c5_22%,#a89897_26%,#7c6b72_30%,#605867_33%,#675a6e_50%,#7b6680_66%,#6f6d6c_72%,#82827e_81%,#5d5b5b_90%,#8a5761_94%,#d9595a_97.500%,#ea6359_100%)] pl-[4px]">
      <svg width="0" height="0" className="absolute">
        <defs>
          <Gradient id="gFinder" from="#5cc6fa" to="#3a6eec" />
          <Gradient id="gSafari" from="#4ba4ee" to="#3472dd" />
          <Gradient id="gGreen" from="#84e97c" to="#58bf47" />
          <Gradient id="gBlue" from="#50aeee" to="#2b5fdf" />
          <Gradient id="gGrey" from="#d3dadd" to="#90918d" />
          <Gradient id="gPurple" from="#8738a8" to="#5b2d87" />
          <Gradient id="gRed" from="#ea6878" to="#e43c41" />
        </defs>
      </svg>
      {dock.map((group, g) => (
        <div key={g} className="flex items-center">
          {g > 0 && (
            <div className="flex w-[45px] justify-center">
              <i className="mb-[6px] h-[88px] w-[2px] bg-[#4a4048]" />
            </div>
          )}
          {group.map((item, i) => (
            <div key={i} className="relative flex h-[112px] w-[98.660px] items-center justify-center pb-[10px]">
              {item.icon}
              {item.on && <i className={`absolute bottom-0 size-2 rounded-full ${g === 0 && i < 7 ? 'bg-[#505050]' : 'bg-black'}`} />}
            </div>
          ))}
        </div>
      ))}
    </div>
  );
}

function Wallpaper() {
  return (
    <svg width="3024" height="1964" viewBox="0 0 3024 1964" className="absolute inset-0">
      <defs>
        <linearGradient id="wGrey" x1="0" y1="0" x2="0" y2="1">
          <stop stopColor="#555" />
          <stop offset=".5" stopColor="#999" />
          <stop offset="1" stopColor="#d0d0d0" />
        </linearGradient>
        <linearGradient id="wDark">
          <stop stopColor="#000" />
          <stop offset=".7" stopColor="#1b0b20" />
          <stop offset="1" stopColor="#2e2030" />
        </linearGradient>
        <linearGradient id="wStreak">
          <stop stopColor="#e9d3b0" />
          <stop offset=".35" stopColor="#ef7d24" />
          <stop offset=".6" stopColor="#c91a12" />
          <stop offset="1" stopColor="#1c0630" />
        </linearGradient>
        <linearGradient id="wEdge">
          <stop stopColor="#050208" />
          <stop offset=".7" stopColor="#7a1712" />
          <stop offset=".95" stopColor="#b05a20" />
          <stop offset="1" stopColor="#4a7890" />
        </linearGradient>
        <linearGradient id="wSlate">
          <stop stopColor="#2a2a28" />
          <stop offset="1" stopColor="#74746e" />
        </linearGradient>
        <linearGradient id="wFire">
          <stop stopColor="#000" />
          <stop offset=".3" stopColor="#3a0820" />
          <stop offset=".5" stopColor="#a8180c" />
          <stop offset=".7" stopColor="#ee4418" />
          <stop offset="1" stopColor="#fb7a38" />
        </linearGradient>
        <linearGradient id="wShade" x1="0" y1="0" x2="0" y2="1">
          <stop stopColor="#2a1a10" stopOpacity=".8" />
          <stop offset="1" stopColor="#2a1a10" stopOpacity="0" />
        </linearGradient>
      </defs>
      <path d="M0 0h3024v1964H0z" fill="#050208" />
      <path d="M2520 70h504v40h-504z" fill="#858283" />
      <path d="M660 73h196v4H660z" fill="url(#wEdge)" />
      <path d="M2476 73h38v4h-38z" fill="#a02014" />
      <path d="M0 1790h960l-200 174H0z" fill="url(#wGrey)" />
      <path d="M915 1830h30l-160 134h-33z" fill="url(#wStreak)" />
      <path d="M945 1820h1255v144H783z" fill="url(#wDark)" />
      <path d="M2190 1954h430l6 10h-440z" fill="url(#wSlate)" />
      <path d="M2200 1820h350l60 134h-410z" fill="#222" />
      <path d="M2700 1800h324v164h-324z" fill="url(#wFire)" />
      <path d="M2500 1800h524v100h-524z" fill="url(#wShade)" />
    </svg>
  );
}

export default function App() {
  return (
    <div className="relative flex h-[1964px] w-[3024px] flex-col overflow-hidden bg-black">
      <Wallpaper />
      <MenuBar />
      <div className="relative mt-[2px] flex h-[1754px] shrink-0 flex-col overflow-hidden rounded-[20px] bg-white">
        <TabStrip />
        <Toolbar />
        <BookmarkBar />
        <div className="flex min-h-0 flex-1">
          <Sidebar />
          <Schedule />
        </div>
        <div className="pointer-events-none absolute inset-x-0 bottom-0 z-20 h-[56px] bg-linear-to-b from-black/0 to-black/12 mask-r-from-92%" />
      </div>
      <Dock />
    </div>
  );
}
